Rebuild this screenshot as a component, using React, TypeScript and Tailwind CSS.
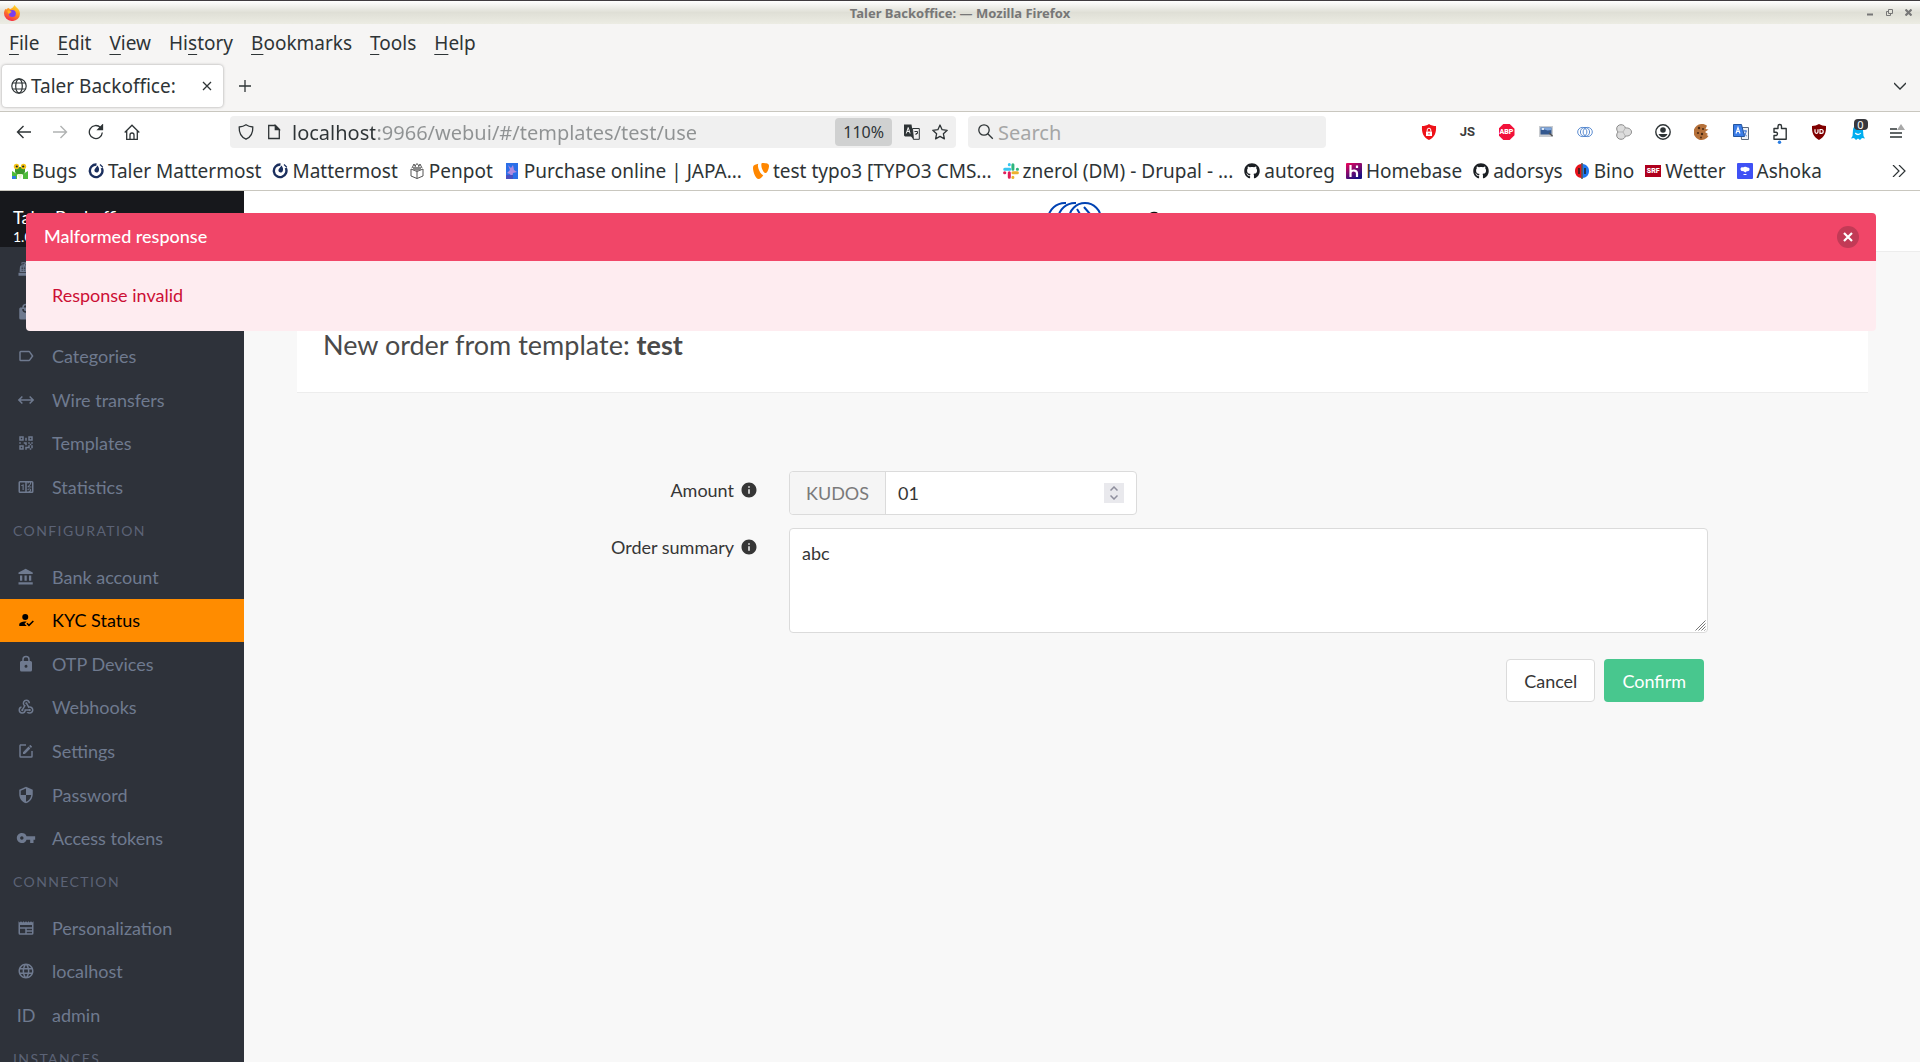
// App.tsx
import React, { useState } from "react";
import { FaGithub } from "react-icons/fa";
import { MdInfo, MdLanguage, MdVpnKey, MdWebhook } from "react-icons/md";

type MenuItem = { label: string; icon: React.ReactNode; active?: boolean };

function Mdi({ d }: { d: string }) {
  return (
    <svg viewBox="0 0 24 24" className="size-[18px]" fill="currentColor" aria-hidden="true">
      <path d={d} />
    </svg>
  );
}

const shopItems: MenuItem[] = [
  {
    label: "Orders",
    icon: <Mdi d="M2,17H22V21H2V17M6.25,7H9V6H6V3H14V6H11V7H17.8C18.8,7 19.8,8 20,9L20.5,16H3.5C4.05,9 3.5,7.5 6.25,7M13,9V11H18V9H13M6,9V10H8V9H6M9,9V10H11V9H9M6,11V12H8V11H6M9,11V12H11V11H9M6,13V14H8V13H6M9,13V14H11V13H9M7,4V5H10V4H7Z" />,
  },
  {
    label: "Inventory",
    icon: <Mdi d="M12,13A5,5 0 0,1 7,8H9A3,3 0 0,0 12,11A3,3 0 0,0 15,8H17A5,5 0 0,1 12,13M12,3A3,3 0 0,1 15,6H9A3,3 0 0,1 12,3M19,6H17A5,5 0 0,0 12,1A5,5 0 0,0 7,6H5C3.89,6 3,6.89 3,8V20A2,2 0 0,0 5,22H19A2,2 0 0,0 21,20V8C21,6.89 20.1,6 19,6Z" />,
  },
  {
    label: "Categories",
    icon: <Mdi d="M16,17H5V7H16L19.55,12M17.63,5.84C17.27,5.33 16.67,5 16,5H5A2,2 0 0,0 3,7V17A2,2 0 0,0 5,19H16C16.67,19 17.27,18.66 17.63,18.15L22,12L17.63,5.84Z" />,
  },
  {
    label: "Wire transfers",
    icon: <Mdi d="M6.45,17.45L1,12L6.45,6.55L7.86,7.96L4.83,11H19.17L16.14,7.96L17.55,6.55L23,12L17.55,17.45L16.14,16.04L19.17,13H4.83L7.86,16.04L6.45,17.45Z" />,
  },
  {
    label: "Templates",
    icon: <Mdi d="M3,11H5V13H3V11M11,5H13V9H11V5M9,11H13V15H11V13H9V11M15,11H17V13H19V11H21V13H19V15H21V19H19V21H17V19H13V21H11V17H15V15H17V13H15V11M19,19V15H17V19H19M15,3H21V9H15V3M17,5V7H19V5H17M3,3H9V9H3V3M5,5V7H7V5H5M3,15H9V21H3V15M5,17V19H7V17H5Z" />,
  },
  {
    label: "Statistics",
    icon: <Mdi d="M4,4H20A2,2 0 0,1 22,6V18A2,2 0 0,1 20,20H4A2,2 0 0,1 2,18V6A2,2 0 0,1 4,4M4,6V18H11V6H4M20,18V6H18.76C19,6.54 18.95,7.07 18.95,7.13C18.88,7.8 18.41,8.5 18.24,8.75L15.91,11.3L19.23,11.28L19.24,12.5L14.04,12.47L14,11.47C14,11.47 17.05,8.24 17.2,7.95C17.34,7.67 17.91,6 16.5,6C15.27,6.05 15.41,7.3 15.41,7.3L13.87,7.31C13.87,7.31 13.88,6.65 14.25,6H13V18H15.58L15.57,17.14L16.54,17.13C16.54,17.13 17.45,16.97 17.46,16.08C17.5,15.08 16.65,15.08 16.5,15.08C16.37,15.08 15.43,15.13 15.43,15.95H13.91C13.91,15.95 13.95,13.89 16.5,13.89C19.1,13.89 18.96,15.91 18.96,15.91C18.96,15.91 19,17.16 17.85,17.63L18.37,18H20M8.92,16H7.42V10.2L5.62,10.76V9.53L8.76,8.41H8.92V16Z" />,
  },
];

const configItems: MenuItem[] = [
  {
    label: "Bank account",
    icon: <Mdi d="M11.5,1L2,6V8H21V6M16,10V17H19V10M2,22H21V19H2M10,10V17H13V10M4,10V17H7V10H4Z" />,
  },
  {
    label: "KYC Status",
    active: true,
    icon: <Mdi d="M21.1,12.5L22.5,13.91L15.97,20.5L12.5,17L13.9,15.59L15.97,17.67L21.1,12.5M10,17L13,20H3V18C3,15.79 6.58,14 11,14L12.89,14.11L10,17M11,4A4,4 0 0,1 15,8A4,4 0 0,1 11,12A4,4 0 0,1 7,8A4,4 0 0,1 11,4Z" />,
  },
  {
    label: "OTP Devices",
    icon: <Mdi d="M12,17A2,2 0 0,0 14,15C14,13.89 13.1,13 12,13A2,2 0 0,0 10,15A2,2 0 0,0 12,17M18,8A2,2 0 0,1 20,10V20A2,2 0 0,1 18,22H6A2,2 0 0,1 4,20V10C4,8.89 4.9,8 6,8H7V6A5,5 0 0,1 12,1A5,5 0 0,1 17,6V8H18M12,3A3,3 0 0,0 9,6V8H15V6A3,3 0 0,0 12,3Z" />,
  },
  { label: "Webhooks", icon: <MdWebhook size={18} /> },
  {
    label: "Settings",
    icon: <Mdi d="M5,3C3.89,3 3,3.89 3,5V19A2,2 0 0,0 5,21H19A2,2 0 0,0 21,19V12H19V19H5V5H12V3H5M17.78,4C17.61,4 17.43,4.07 17.3,4.2L16.08,5.41L18.58,7.91L19.8,6.7C20.06,6.44 20.06,6 19.8,5.75L18.25,4.2C18.12,4.07 17.95,4 17.78,4M15.37,6.12L8,13.5V16H10.5L17.87,8.62L15.37,6.12Z" />,
  },
  {
    label: "Password",
    icon: <Mdi d="M12,12H19C18.47,16.11 15.72,19.78 12,20.92V12H5V6.3L12,3.19M12,1L3,5V11C3,16.55 6.84,21.73 12,23C17.16,21.73 21,16.55 21,11V5L12,1Z" />,
  },
  { label: "Access tokens", icon: <MdVpnKey size={20} /> },
];

const connectionItems: MenuItem[] = [
  {
    label: "Personalization",
    icon: <Mdi d="M20,11H4V8H20M20,15H13V13H20M20,19H13V17H20M11,19H4V13H11M20.33,4.67L18.67,3L17,4.67L15.33,3L13.67,4.67L12,3L10.33,4.67L8.67,3L7,4.67L5.33,3L3.67,4.67L2,3V19A2,2 0 0,0 4,21H20A2,2 0 0,0 22,19V3L20.33,4.67Z" />,
  },
  { label: "localhost", icon: <MdLanguage size={18} /> },
  { label: "admin", icon: <span>ID</span> },
];

function MenuList({ items, className }: { items: MenuItem[]; className: string }) {
  return (
    <ul className={`grid auto-rows-fr ${className}`}>
      {items.map((item) => (
        <li key={item.label} className="grid">
          <a
            href="#"
            className={`flex items-center ${item.active ? "bg-[#ff8c00] text-black" : "text-[#6f7a8f]"}`}
          >
            <span className="flex w-[52px] justify-center">{item.icon}</span>
            {item.label}
          </a>
        </li>
      ))}
    </ul>
  );
}

function MenuLabel({ children }: { children: React.ReactNode }) {
  return <p className="h-[46px] px-[13px] pt-3 text-[14px] leading-5 tracking-widest text-[#5c6376]">{children}</p>;
}

/* ---------- browser chrome ---------- */

const menus = [
  ["", "F", "ile"],
  ["", "E", "dit"],
  ["", "V", "iew"],
  ["Hi", "s", "tory"],
  ["", "B", "ookmarks"],
  ["", "T", "ools"],
  ["", "H", "elp"],
];

function FirefoxLogo() {
  return (
    <svg viewBox="0 0 16 16" className="size-4" aria-hidden="true">
      <defs>
        <linearGradient id="ff" x1="0.8" y1="0" x2="0.3" y2="1">
          <stop offset="0" stopColor="#ffe226" />
          <stop offset="0.5" stopColor="#ff8a1f" />
          <stop offset="1" stopColor="#f4264f" />
        </linearGradient>
      </defs>
      <path d="M10.5 0c.6 1.3 1.600 1.700 2.700 3 1.700 1.500 2.800 3.500 2.800 5.800A7.500 7.200 0 0 1 8 16 7.800 7.500 0 0 1 0 8.500C0 6.500.6 5 1.500 3.700l.6 1.100c.7-1 1.700-1.600 2.700-1.700L6 4.200C7.800 3.200 9.500 2.500 10.500 0z" fill="url(#ff)" />
      <circle cx="8.300" cy="8.600" r="3.500" fill="#7a3ff0" />
      <path d="M3.500 5.500c2 0 3 .4 4.200 1.500-1 .8-2 .6-2.600 2.200-1-.9-1.800-2-1.600-3.700z" fill="#ffb21c" />
    </svg>
  );
}

function Globe() {
  return (
    <svg viewBox="0 0 16 16" className="size-4" fill="none" stroke="#2e3436" strokeWidth="1.200" aria-hidden="true">
      <circle cx="8" cy="8" r="7.200" />
      <ellipse cx="8" cy="8" rx="3.300" ry="7.200" />
      <path d="M1.500 5h13M1.500 11h13" />
    </svg>
  );
}

function Mattermost() {
  return (
    <svg viewBox="0 0 16 16" className="size-4" aria-hidden="true">
      <path d="M8.500 1.500A6.300 6.300 0 1 0 13.800 5" fill="none" stroke="#1b2f5e" strokeWidth="2.400" />
      <path d="M9.500 2.500c1.600 2 2 4 1.200 5.700-.7 1.400-2.400 1.600-3.500.8-1-.8-1-2.200-.2-3.200z" fill="#1b2f5e" />
      <path d="M12 1.500l2.800 2.700" stroke="#1b2f5e" strokeWidth="1.200" />
    </svg>
  );
}

const bookmarks: { title: string; icon: React.ReactNode }[] = [
  {
    title: "Bugs",
    icon: (
      <svg viewBox="0 0 16 16" className="size-4" aria-hidden="true">
        <path d="M3 4h10v5l-2 3H5L3 9z" fill="#3c9a2c" />
        <path d="M0 8l5 3v5H0zM16 8l-5 3v5h5z" fill="#4dbb3a" />
        <path d="M0 13h4v3H0z" fill="#2f7de0" />
        <path d="M5 11l3 5 3-5z" fill="#e9f7d0" />
        <circle cx="4.500" cy="3.500" r="2.700" fill="#f5c518" />
        <circle cx="11.500" cy="3.500" r="2.700" fill="#f5c518" />
        <circle cx="4.800" cy="3.500" r="1.100" fill="#222" />
        <circle cx="11.200" cy="3.500" r="1.100" fill="#222" />
      </svg>
    ),
  },
  { title: "Taler Mattermost", icon: <Mattermost /> },
  { title: "Mattermost", icon: <Mattermost /> },
  {
    title: "Penpot",
    icon: (
      <svg viewBox="0 0 16 16" className="size-4" fill="none" stroke="#555" aria-hidden="true">
        <path d="M2 6l6 2.500L14 6v7l-6 2.500L2 13zM8 8.500v7" />
        <path d="M3 5l2-4 2 4V7M9 7V5l2-4 2 4M6 3l2-2.500L10 3" />
        <path d="M4 4h8v3L8 8 4 7z" fill="#888" stroke="none" />
      </svg>
    ),
  },
  {
    title: "Purchase online | JAPA...",
    icon: (
      <svg viewBox="0 0 16 16" className="size-4" aria-hidden="true">
        <path d="M2 0h12v16H2z" fill="#2b6fe8" />
        <path d="M4 2l3 3 2-3 1 5 3 2-4 1-1 5-2-4-3-1 3-3z" fill="#b08be0" />
        <path d="M2 12h7v4H2z" fill="#4a4fc0" />
      </svg>
    ),
  },
  {
    title: "test typo3 [TYPO3 CMS...",
    icon: (
      <svg viewBox="0 0 16 16" className="size-4" fill="#ff8700" aria-hidden="true">
        <path d="M5.300.8C4.500 2 5 5 6.200 7.500 7.500 10.300 9 12 10.300 12c-1 2-3 4-4.800 4C3 16 0 9.500 0 5c0-2 .8-2.700 2-3.200C3 1.300 4.300 1 5.300.8z" />
        <path d="M9.300 0C13.500 0 16 .7 16 2.700c0 3.500-2 7.300-3.600 7.300C10.700 10 8.300 5.500 8.300 2 8.300.6 8.600 0 9.300 0z" />
      </svg>
    ),
  },
  {
    title: "znerol (DM) - Drupal - ...",
    icon: (
      <svg viewBox="0 0 16 16" className="size-4" strokeWidth="3" strokeLinecap="round" aria-hidden="true">
        <path d="M1.700 6.200h5M6.300 1.500v.2" stroke="#36c5f0" />
        <path d="M9.900 1.700v4.500M14.300 6.200h.2" stroke="#2eb67d" />
        <path d="M9.900 9.800h4.500M9.900 14.300v.2" stroke="#ecb22e" />
        <path d="M6.300 9.800v4.500M1.600 9.800h.2" stroke="#e01e5a" />
      </svg>
    ),
  },
  { title: "autoreg", icon: <FaGithub size={16} color="#1b1f23" /> },
  {
    title: "Homebase",
    icon: (
      <svg viewBox="0 0 16 16" className="size-4" aria-hidden="true">
        <defs>
          <linearGradient id="hb" x1="0" y1="0" x2="0.6" y2="1">
            <stop offset="0" stopColor="#f0055a" />
            <stop offset="1" stopColor="#1a0f80" />
          </linearGradient>
        </defs>
        <rect width="16" height="16" rx="1" fill="url(#hb)" />
        <path d="M4.500 2v12M4.500 9.500c2-3 6.500-2.500 6.500 1V14M11 2.500v2.500" stroke="#fff" strokeWidth="2.200" fill="none" />
      </svg>
    ),
  },
  { title: "adorsys", icon: <FaGithub size={16} color="#1b1f23" /> },
  {
    title: "Bino",
    icon: (
      <svg viewBox="0 0 16 16" className="size-4" aria-hidden="true">
        <path d="M7.500 1v14C3 14.500 1 11.500 1 8s2-6.500 6.500-7z" fill="#e8121b" />
        <path d="M8.500 1v14C13 14.500 15 11.500 15 8s-2-6.500-6.500-7z" fill="#1f77f0" />
        <path d="M8 0v16" stroke="#222" strokeWidth="1.200" />
        <path d="M5 5v6M11 5v6" stroke="#222" strokeWidth="1.500" />
      </svg>
    ),
  },
  {
    title: "Wetter",
    icon: (
      <span className="flex h-3 w-4 items-center justify-center bg-[#af001d] font-[Roboto] text-[7px] font-black text-white">
        SRF
      </span>
    ),
  },
  {
    title: "Ashoka",
    icon: (
      <svg viewBox="0 0 16 16" className="size-4" aria-hidden="true">
        <rect width="16" height="16" rx="1" fill="#3f51f5" />
        <path d="M3.500 6c0-1.500 1.500-2 2.500-1.500C7 3.500 9.500 3.500 10.300 4.500c1.200-.3 2.500.5 2.200 2 0 1.500-1.500 2-2.500 1.500L8.500 9.500 6 8C4.500 8.500 3.500 7.500 3.500 6zM6.500 11h3v1h-3z" fill="#fff" />
      </svg>
    ),
  },
];

const toolbarIcons: { name: string; icon: React.ReactNode }[] = [
  {
    name: "Privacy",
    icon: (
      <svg viewBox="0 0 16 16" className="size-4" aria-hidden="true">
        <path d="M8 0c2 1.500 4.500 2 7 2 .5 7-1.500 11.500-7 14C2.500 13.500.5 9 1 2c2.500 0 5-.5 7-2z" fill="#ee1219" />
        <path d="M5 7.500h6V12H5z" fill="#fff" />
        <path d="M6.200 7.500V6a1.800 1.800 0 0 1 3.600 0v1.500" fill="none" stroke="#fff" />
        <path d="M8 9v1.500" stroke="#ee1219" />
      </svg>
    ),
  },
  { name: "JavaScript", icon: <span className="font-[Roboto] text-[13px] font-bold text-[#3c3c3c]">JS</span> },
  {
    name: "Adblock",
    icon: (
      <span className="flex size-4 items-center justify-center bg-[#f2113a] font-[Roboto] text-[7px] font-black text-white [clip-path:polygon(30%_0,70%_0,100%_30%,100%_70%,70%_100%,30%_100%,0_70%,0_30%)]">
        ABP
      </span>
    ),
  },
  {
    name: "Screenshot",
    icon: (
      <svg viewBox="0 0 16 16" className="size-4" aria-hidden="true">
        <path d="M1 2h14v11H1z" fill="#c9ccd0" />
        <path d="M2.500 3.500h11v7h-11z" fill="#34588f" />
        <path d="M2.500 6V3.500h11V6l-4 .5-3-1z" fill="#7fa6dc" />
        <circle cx="5" cy="5" r="1" fill="#fff" />
        <path d="M11 9l3.500 3" stroke="#555" strokeWidth="1.500" />
      </svg>
    ),
  },
  {
    name: "Taler wallet",
    icon: (
      <svg viewBox="0 0 16 16" className="size-4" fill="none" stroke="#4a80cc" strokeWidth="0.900" aria-hidden="true">
        <circle cx="5.300" cy="8" r="4.600" />
        <circle cx="8" cy="8" r="4.600" />
        <circle cx="10.700" cy="8" r="4.600" />
      </svg>
    ),
  },
  {
    name: "Containers",
    icon: (
      <svg viewBox="0 0 16 16" className="size-4" fill="#dcdcdc" stroke="#8a8a8a" aria-hidden="true">
        <path d="M5 .7c2.500 0 4 1.300 4.300 3.300C13 3.500 15.500 5.500 15.500 8s-2.500 4.500-6.200 4C9 14 7.500 15.300 5 15.300c-2.500 0-4.500-1.800-4.300-4.300.1-1.300.6-2.200 1.300-3-.7-.8-1.200-1.700-1.300-3C.5 2.500 2.500.7 5 .7z" />
        <path d="M9.300 4L7 8l2.300 4M2 8h5" fill="none" stroke="#b5b5b5" />
      </svg>
    ),
  },
  {
    name: "Account",
    icon: (
      <svg viewBox="0 0 16 16" className="size-4" aria-hidden="true">
        <circle cx="8" cy="8" r="7.200" fill="none" stroke="#2e3436" strokeWidth="1.400" />
        <circle cx="8" cy="6" r="2.800" fill="#2e3436" />
        <path d="M3.500 10h9c-.7 2-2.300 3.200-4.500 3.200S4.200 12 3.500 10z" fill="#2e3436" />
      </svg>
    ),
  },
  {
    name: "Cookies",
    icon: (
      <svg viewBox="0 0 16 16" className="size-4" aria-hidden="true">
        <path d="M8 0c2 0 3.500.6 5 1.800L11.500 5l3 .5L11 8l3 2-1.500 1 2 1A8 8 0 1 1 8 0z" fill="#b5713a" />
        <g fill="#4a2a14">
          <circle cx="5" cy="4" r="1.200" />
          <circle cx="9" cy="5" r="1" />
          <circle cx="4" cy="9" r="1.100" />
          <circle cx="8" cy="10" r="1.200" />
          <circle cx="7" cy="13.500" r="0.900" />
        </g>
      </svg>
    ),
  },
  {
    name: "Translate",
    icon: (
      <svg viewBox="0 0 16 16" className="size-4" aria-hidden="true">
        <path d="M7.500 3.500h8v12h-7z" fill="#eef1f5" stroke="#5e6a7a" />
        <path d="M10 7h4M12 6v1M10.500 12c1.500-1 2.500-3 2.500-5M10.800 8.500c.5 1.500 1.500 2.500 3 3.500" stroke="#3d74d6" fill="none" />
        <path d="M.5.500h8l3 12h-11z" fill="#3b7de8" stroke="#23559f" />
        <path d="M3 9.500l2-6 2 6M3.700 7.500h2.600" stroke="#fff" strokeWidth="1.100" fill="none" />
      </svg>
    ),
  },
  {
    name: "Extensions",
    icon: (
      <svg viewBox="0 0 16 24" className="h-6 w-4" fill="none" aria-hidden="true">
        <path d="M6 8.500V6.300a1.500 1.500 0 0 1 3.500 0v2.200h4.700v10.700H2v-3.700h2.200a1.700 1.700 0 0 0 0-3.300H2V8.500z" stroke="#2e3436" strokeWidth="1.400" strokeLinejoin="round" />
        <circle cx="7.500" cy="22.300" r="1.700" fill="#2a7de1" />
      </svg>
    ),
  },
  {
    name: "uBlock",
    icon: (
      <svg viewBox="0 0 16 16" className="size-4" aria-hidden="true">
        <path d="M8 0c2 1.300 4.500 2 7 2 .3 7-1.500 11-7 14C2.500 13 .7 9 1 2c2.500 0 5-.7 7-2z" fill="#800000" />
        <path d="M4 5.300v2.500a1.500 1.500 0 0 0 3 0V5.300M9 9.300V5.500h1.300a1.900 1.900 0 0 1 0 3.800z" fill="none" stroke="#fff" strokeWidth="1.200" />
      </svg>
    ),
  },
  {
    name: "Ghostery",
    icon: (
      <span className="relative">
        <svg viewBox="0 0 16 16" className="size-4" aria-hidden="true">
          <path d="M3 6a5 5 0 0 1 10 0l.5 6 1.500 2.500-3-.5-2 2-2-1.500L6 16l-2-2-3 .5L2.500 12z" fill="#00aef0" />
          <path d="M5.300 9c1.500 2 4 2 5.400 0" stroke="#fff" strokeWidth="1.300" fill="none" />
        </svg>
        <span className="absolute -top-[5px] left-1 h-[11px] w-3.5 rounded-sm bg-[#38383d] text-center text-[11px] leading-[11px] text-white">
          0
        </span>
      </span>
    ),
  },
  {
    name: "Menu",
    icon: (
      <svg viewBox="0 0 16 16" className="size-4" aria-hidden="true">
        <path d="M1 5h7M1 9h12M1 13h12" stroke="#2e3436" strokeWidth="1.300" />
        <path d="M12 0l4 6H8z" fill="#a8a8a8" />
      </svg>
    ),
  },
];

function BrowserChrome() {
  return (
    <header className="font-['Noto_Sans',sans-serif] text-[#2e3436]">
      <div className="grid h-6 grid-cols-[1fr_auto_1fr] items-center border-t border-[#3f3b3f] bg-linear-to-b from-white via-[#dfdfd6] to-[#ecece3] px-1">
        <FirefoxLogo />
        <span className="text-[13px] leading-5 font-bold text-[#777]">Taler Backoffice: — Mozilla Firefox</span>
        <div className="flex justify-end gap-3 pr-1">
          <button aria-label="Minimize">
            <svg viewBox="0 0 7 7" className="size-[7px]" stroke="#777" strokeWidth="2"><path d="M0 5.500h6" /></svg>
          </button>
          <button aria-label="Restore">
            <svg viewBox="0 0 7 7" className="size-[7px]" fill="none" stroke="#777"><path d="M2.500 .5h4v4h-4zM2.500 2.500h-2v4h4v-2" /></svg>
          </button>
          <button aria-label="Close window">
            <svg viewBox="0 0 7 7" className="size-[7px]" stroke="#777" strokeWidth="2.200"><path d="M.5.500l6 6M6.500.500l-6 6" /></svg>
          </button>
        </div>
      </div>

      <nav className="flex h-10 items-center bg-[#f6f5f4] pb-0.5 text-[19px] leading-6">
        {menus.map(([before, key, after]) => (
          <button key={before + key + after} className="px-[9px]">
            {before}
            <span className="underline underline-offset-4 [text-decoration-skip-ink:none]">{key}</span>
            {after}
          </button>
        ))}
      </nav>

      <div className="flex h-12 items-center border-b border-[#c9c7bf] bg-[#f6f5f4] pr-2.5 pb-[3px] pl-0.5">
        <div className="flex h-[42px] w-[221px] items-center gap-1 rounded bg-white pr-2.5 pl-[9px] shadow-[0_0_3px_rgba(0,0,0,0.35)]">
          <Globe />
          <span className="flex-1 text-[19px] leading-6">Taler Backoffice:</span>
          <button aria-label="Close tab">
            <svg viewBox="0 0 12 12" className="size-3" stroke="#2e3436" strokeWidth="1.300"><path d="M2 2l8 8M10 2l-8 8" /></svg>
          </button>
        </div>
        <button aria-label="New tab" className="ml-4">
          <svg viewBox="0 0 12 12" className="size-3" stroke="#2e3436" strokeWidth="1.300"><path d="M0 6h12M6 0v12" /></svg>
        </button>
        <button aria-label="List all tabs" className="ml-auto p-1">
          <svg viewBox="0 0 12 8" className="h-2 w-3" fill="none" stroke="#2e3436" strokeWidth="1.300"><path d="M0 1l6 6 6-6" /></svg>
        </button>
      </div>

      <div className="flex h-10 items-center bg-white pl-1.5">
        <button aria-label="Back" className="flex w-9 justify-center">
          <svg viewBox="0 0 16 16" className="size-4" fill="none" stroke="#2e3436" strokeWidth="1.400"><path d="M15 8H2M7.500 2L1.500 8l6 6" /></svg>
        </button>
        <button aria-label="Forward" className="flex w-9 justify-center">
          <svg viewBox="0 0 16 16" className="size-4" fill="none" stroke="#b0b2b2" strokeWidth="1.400"><path d="M1 8h13M8.500 2l6 6-6 6" /></svg>
        </button>
        <button aria-label="Reload" className="flex w-9 justify-center">
          <svg viewBox="0 0 16 16" className="size-4" fill="none" stroke="#2e3436" strokeWidth="1.300">
            <path d="M14.300 8.500A6.500 6.500 0 1 1 12.500 3.500" />
            <path d="M14.500 1v4.500H10z" fill="#2e3436" />
          </svg>
        </button>
        <button aria-label="Home" className="flex w-9 justify-center">
          <svg viewBox="0 0 16 16" className="size-4" fill="none" stroke="#2e3436" strokeWidth="1.300">
            <path d="M.7 8.500L8 1.200l7.300 7.300M2.700 7v8.300h10.600V7" />
            <path d="M6 15v-4a2 2 0 0 1 4 0v4" />
          </svg>
        </button>

        <div className="ml-20 flex h-8 flex-1 items-center rounded bg-[#f0f0f0] px-2">
          <svg viewBox="0 0 16 16" className="size-4" fill="none" stroke="#2e3436" strokeWidth="1.300" aria-hidden="true">
            <path d="M8 .8c2 1.400 4.300 2 6.800 2.200.3 6-1.300 9.800-6.800 12.200C2.500 12.800.9 9 1.200 3 3.700 2.800 6 2.200 8 .8z" />
          </svg>
          <svg viewBox="0 0 16 16" className="ml-3 size-4" fill="none" stroke="#2e3436" strokeWidth="1.300" aria-hidden="true">
            <path d="M2.700 1.500h6.600l4 4v9H2.700z" />
            <path d="M9.300 1.500v4h4z" fill="#2e3436" />
          </svg>
          <input
            aria-label="Address"
            defaultValue="localhost:9966/webui/#/templates/test/use"
            className="ml-2.5 min-w-0 flex-1 bg-[linear-gradient(90deg,#2e3436_83px,#8f9293_83px)] bg-clip-text pt-0.5 text-[20px] leading-7 text-transparent outline-none"
          />
          <button className="h-7 rounded-sm bg-[#d0d1d1] px-2 text-[16px] leading-7">110%</button>
          <button aria-label="Translate page" className="ml-3">
            <svg viewBox="0 0 16 16" className="size-4" aria-hidden="true">
              <path d="M8.500 4.500h6.800v10.800h-6z" fill="none" stroke="#2e3436" />
              <path d="M10.500 7.500h3v2H12v1.500" stroke="#2e3436" fill="none" />
              <path d="M0 .5h7.500l1.500 9L9.500 15 7 12.500H1L0 11.500z" fill="#2e3436" />
              <path d="M2.300 9.500l1.900-6 1.900 6M3 7.500h2.500" stroke="#f0f0f0" fill="none" />
            </svg>
          </button>
          <button aria-label="Bookmark page" className="ml-3">
            <svg viewBox="0 0 16 16" className="size-4" fill="none" stroke="#2e3436" strokeWidth="1.300" strokeLinejoin="round" aria-hidden="true">
              <path d="M8 1l2.100 4.700 5.100.6-3.800 3.500 1 5.100L8 12.400l-4.400 2.500 1-5.100L.8 6.300l5.100-.6z" />
            </svg>
          </button>
        </div>

        <div className="ml-3 flex h-8 w-[358px] items-center gap-1 rounded bg-[#f0f0f0] px-2.5">
          <svg viewBox="0 0 16 16" className="size-4 shrink-0" fill="none" stroke="#2e3436" strokeWidth="1.300" aria-hidden="true">
            <circle cx="6" cy="6" r="5.200" />
            <path d="M9.800 9.800l5 5" />
          </svg>
          <input
            aria-label="Search"
            placeholder="Search"
            className="min-w-0 flex-1 bg-transparent pt-0.5 text-[20px] leading-7 outline-none placeholder:text-[#a5a6a6]"
          />
        </div>

        <div className="ml-[83px] flex pr-1">
          {toolbarIcons.map((t) => (
            <button key={t.name} aria-label={t.name} className="flex h-8 w-[39px] items-center justify-center">
              {t.icon}
            </button>
          ))}
        </div>
      </div>

      <div className="flex h-[39px] items-center gap-[11px] border-b border-[#c9c7bf] bg-white pr-3.5 pl-3 text-[19px] leading-6">
        {bookmarks.map((b) => (
          <a key={b.title} href="#" className="flex items-center gap-1 whitespace-nowrap">
            {b.icon}
            {b.title}
          </a>
        ))}
        <button aria-label="More bookmarks" className="ml-auto">
          <svg viewBox="0 0 14 12" className="h-3 w-3.5" fill="none" stroke="#2e3436" strokeWidth="1.200"><path d="M1 0l6 6-6 6M7 0l6 6-6 6" /></svg>
        </button>
      </div>
    </header>
  );
}

/* ---------- page ---------- */

function Notification({ onClose }: { onClose: () => void }) {
  return (
    <article className="absolute top-[22px] right-11 left-[26px] z-10 overflow-hidden rounded">
      <div className="flex h-12 items-center justify-between bg-[#f14668] pr-[17px] pl-[18px] font-medium text-white">
        <p className="pb-0.5">Malformed response</p>
        <button
          aria-label="delete"
          onClick={onClose}
          className="flex size-[22px] items-center justify-center rounded-full bg-[#c23a56]"
        >
          <svg viewBox="0 0 10 10" className="size-2.5" stroke="#fff" strokeWidth="2.200"><path d="M1 1l8 8M9 1l-8 8" /></svg>
        </button>
      </div>
      <div className="h-[70px] bg-[#feecf0] px-[26px] py-[21px] text-[#cc0f35]">Response invalid</div>
    </article>
  );
}

function FieldLabel({ htmlFor, children }: { htmlFor: string; children: React.ReactNode }) {
  return (
    <label htmlFor={htmlFor} className="mr-[31px] flex h-[38px] w-[301px] shrink-0 items-center justify-end gap-1.5 text-[#363636]">
      {children}
      <MdInfo size={18} />
    </label>
  );
}

export default function App() {
  const [showError, setShowError] = useState(true);

  return (
    <div className="flex h-screen flex-col overflow-hidden">
      <BrowserChrome />

      <div className="relative flex min-h-0 flex-1 bg-[#f8f8f8] font-[Lato,sans-serif] text-[18px] leading-[26px]">
        {showError && <Notification onClose={() => setShowError(false)} />}

        <aside className="w-[244px] shrink-0 overflow-hidden bg-[#2e323a]">
          <div className="h-14 bg-[#17181c] px-[13px] pt-3.5 text-white">
            <p className="leading-6">Taler Backoffice</p>
            <p className="text-[14px] leading-4">1.0.0</p>
          </div>
          <MenuList items={shopItems} className="h-[262px]" />
          <MenuLabel>CONFIGURATION</MenuLabel>
          <MenuList items={configItems} className="h-[305px]" />
          <MenuLabel>CONNECTION</MenuLabel>
          <MenuList items={connectionItems} className="h-[131px]" />
          <MenuLabel>INSTANCES</MenuLabel>
        </aside>

        <main className="min-w-0 flex-1">
          <div className="flex h-[61px] justify-center border-b border-[#ededed] bg-white pt-2.5">
            <svg viewBox="0 0 152 40" className="h-10 w-[152px]" fill="none" aria-label="Taler">
              <g stroke="#0042b3" strokeWidth="2">
                <circle cx="79" cy="18" r="16" />
                <path d="M70 2A17 17 0 0 0 52 18a17 17 0 0 0 8 14" />
                <path d="M60 2A17 17 0 0 0 42 18a17 17 0 0 0 8 14" />
                <path d="M71 8l3 5M78 6l6 7" />
              </g>
              <path d="M144 14c1-3 7-3 8 0" stroke="#111" strokeWidth="2" />
            </svg>
          </div>

          <section className="mr-[52px] ml-[53px] border-b border-[#ededed] bg-white px-[26px] pt-[74px] pb-[29px]">
            <h1 className="text-[27px] leading-[37px] text-[#4a4a4a]">
              New order from template: <b>test</b>
            </h1>
          </section>

          <form className="mr-[52px] ml-[53px] flex flex-col gap-[13px] px-40 pt-[78px]" onSubmit={(e) => e.preventDefault()}>
            <div className="flex">
              <FieldLabel htmlFor="amount">Amount</FieldLabel>
              <div className="flex h-11 w-[348px] items-center rounded border border-[#dbdbdb] bg-white text-[#363636]">
                <span className="flex h-full items-center rounded-l border-r border-[#dbdbdb] bg-[#f5f5f5] px-4 text-[#7a7a7a]">
                  KUDOS
                </span>
                <input
                  id="amount"
                  type="number"
                  defaultValue="01"
                  className="h-full min-w-0 flex-1 [appearance:textfield] px-3 outline-none [&::-webkit-inner-spin-button]:appearance-none"
                />
                <div className="mr-3 flex h-5 w-5 flex-col items-center justify-center gap-1 bg-[#e9e9ed] text-[#8f8f9d]">
                  <button type="button" aria-label="Increase">
                    <svg viewBox="0 0 8 5" className="h-[5px] w-2" fill="none" stroke="currentColor" strokeWidth="1.500"><path d="M.5 4.500L4 1l3.500 3.500" /></svg>
                  </button>
                  <button type="button" aria-label="Decrease">
                    <svg viewBox="0 0 8 5" className="h-[5px] w-2" fill="none" stroke="currentColor" strokeWidth="1.500"><path d="M.5.500L4 4 7.500.500" /></svg>
                  </button>
                </div>
              </div>
            </div>

            <div className="flex">
              <FieldLabel htmlFor="summary">Order summary</FieldLabel>
              <div className="relative flex-1">
                <textarea
                  id="summary"
                  defaultValue="abc"
                  className="block h-[105px] w-full resize-none rounded border border-[#dbdbdb] bg-white px-3 py-[11px] text-[#363636] outline-none"
                />
                <svg viewBox="0 0 11 11" className="absolute right-0.5 bottom-0.5 size-[11px]" stroke="#777" aria-hidden="true">
                  <path d="M.5 10.500l10-10M3.500 10.500l7-7M6.500 10.500l4-4M9.500 10.500l1-1" />
                </svg>
              </div>
            </div>

            <div className="flex justify-end gap-[9px] pt-[13px] pr-1">
              <button type="button" className="h-[43px] rounded border border-[#dbdbdb] bg-white px-[17px] text-[#363636]">
                Cancel
              </button>
              <button type="submit" className="h-[43px] rounded bg-[#48c78e] px-[18px] text-white">
                Confirm
              </button>
            </div>
          </form>
        </main>
      </div>
    </div>
  );
}
